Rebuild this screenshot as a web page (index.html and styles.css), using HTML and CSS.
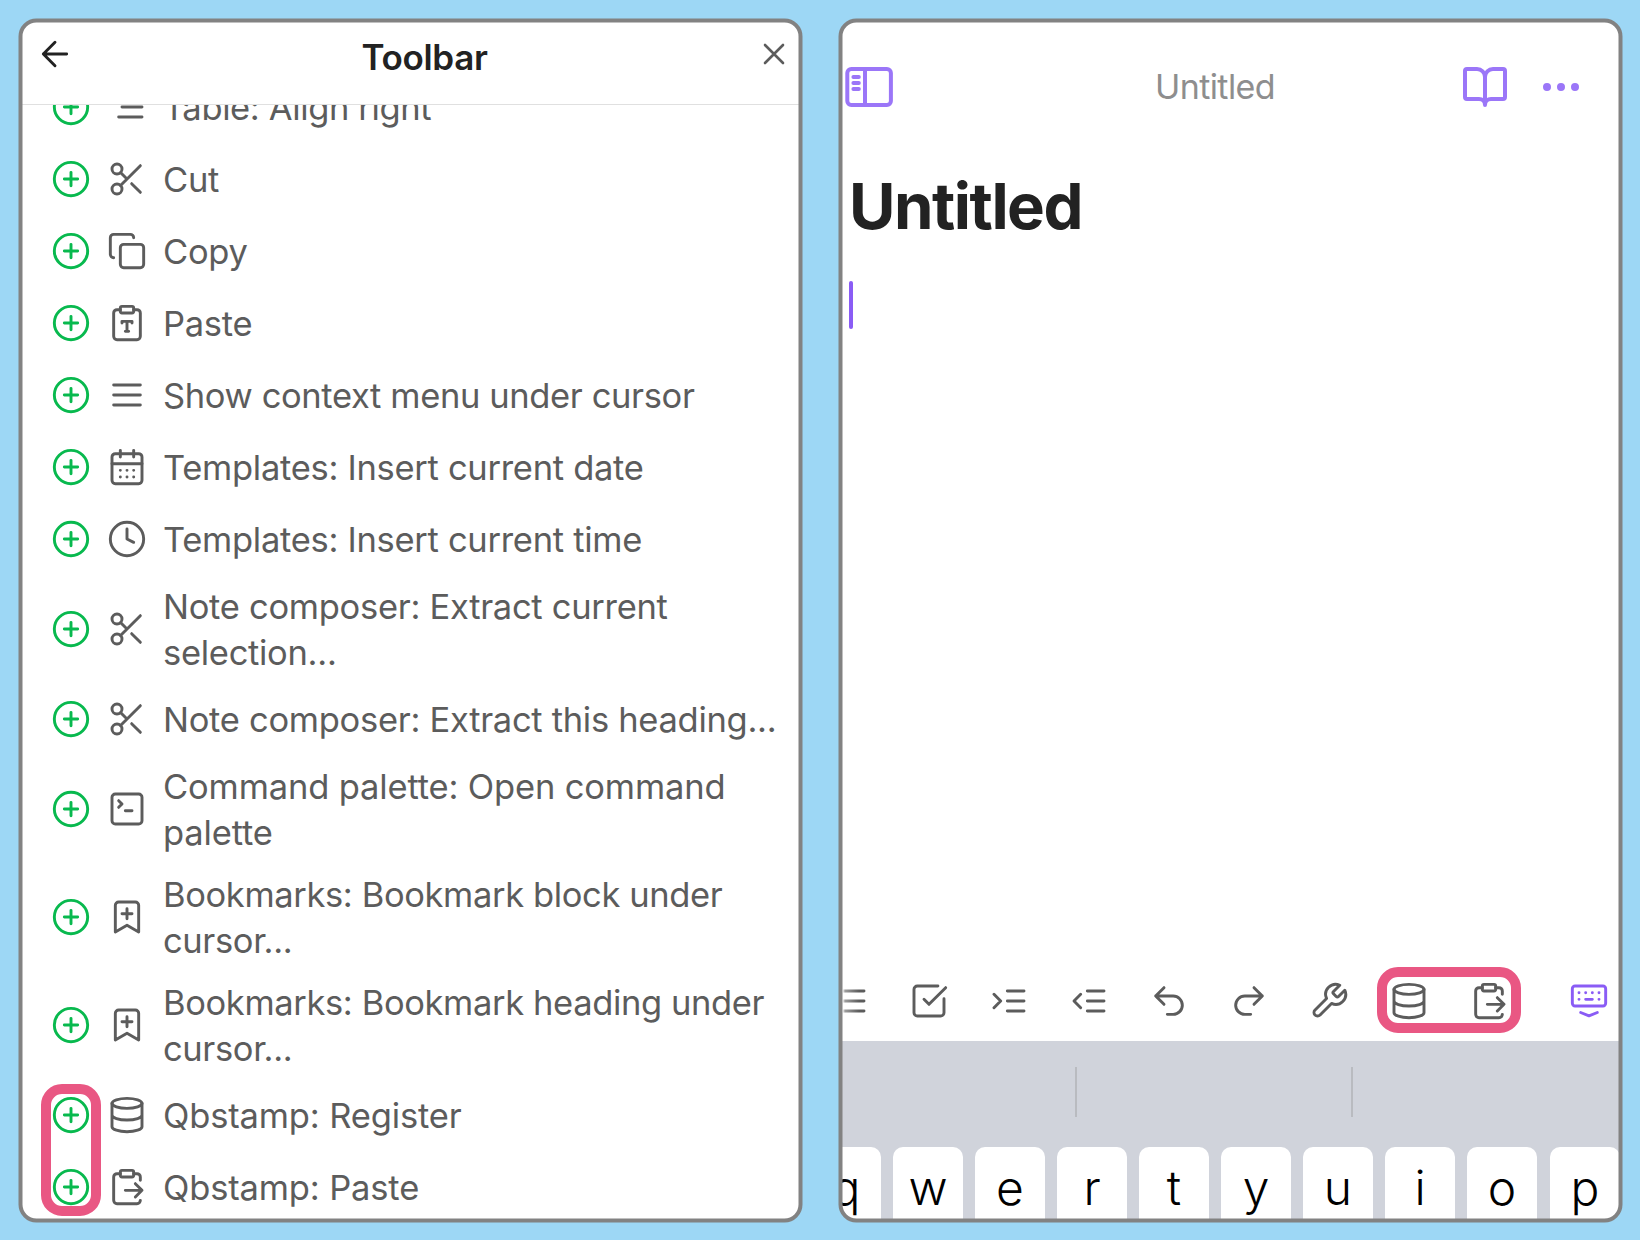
FILE: index.html
```html
<!DOCTYPE html>
<html lang="en">
<head>
<meta charset="utf-8">
<title>Toolbar settings</title>
<link rel="stylesheet" href="styles.css">
</head>
<body>
<svg class="sprite" aria-hidden="true">
  <symbol id="plus" viewBox="0 0 24 24"><circle cx="12" cy="12" r="10"/><path d="M8 12h8M12 8v8"/></symbol>
  <symbol id="align-right" viewBox="0 0 24 24"><path d="M21 6H3M21 12H9M21 18H7"/></symbol>
  <symbol id="cut" viewBox="0 0 24 24"><circle cx="6" cy="6" r="3"/><circle cx="6" cy="18" r="3"/><path d="M8.12 8.12 12 12M20 4 8.12 15.88M14.8 14.8 20 20"/></symbol>
  <symbol id="copy" viewBox="0 0 24 24"><rect x="8" y="8" width="14" height="14" rx="2"/><path d="M4 16c-1.1 0-2-.9-2-2V4c0-1.1.9-2 2-2h10c1.1 0 2 .9 2 2"/></symbol>
  <symbol id="paste" viewBox="0 0 24 24"><rect x="8" y="2" width="8" height="4" rx="1"/><path d="M16 4h2a2 2 0 0 1 2 2v14a2 2 0 0 1-2 2H6a2 2 0 0 1-2-2V6a2 2 0 0 1 2-2h2M9 12v-1h6v1M11 17h2M12 11v6"/></symbol>
  <symbol id="menu" viewBox="0 0 24 24"><path d="M4 6h16M4 12h16M4 18h16"/></symbol>
  <symbol id="calendar" viewBox="0 0 24 24"><rect x="3" y="4" width="18" height="18" rx="2"/><path d="M8 2v4M16 2v4M3 10h18M8 14h.01M12 14h.01M16 14h.01M8 18h.01M12 18h.01M16 18h.01"/></symbol>
  <symbol id="clock" viewBox="0 0 24 24"><circle cx="12" cy="12" r="10"/><path d="M12 6v6l4 2"/></symbol>
  <symbol id="terminal" viewBox="0 0 24 24"><rect x="3" y="3" width="18" height="18" rx="2"/><path d="m7 11 2-2-2-2M11 13h4"/></symbol>
  <symbol id="bookmark" viewBox="0 0 24 24"><path d="m19 21-7-4-7 4V5a2 2 0 0 1 2-2h10a2 2 0 0 1 2 2v16zM12 7v6M15 10H9"/></symbol>
  <symbol id="database" viewBox="0 0 24 24"><ellipse cx="12" cy="5" rx="9" ry="3"/><path d="M3 5v14c0 1.66 4.03 3 9 3s9-1.34 9-3V5M3 12c0 1.66 4.03 3 9 3s9-1.34 9-3"/></symbol>
  <symbol id="clip-arrow" viewBox="0 0 24 24"><rect x="8" y="2" width="8" height="4" rx="1"/><path d="M8 4H6a2 2 0 0 0-2 2v14a2 2 0 0 0 2 2h12a2 2 0 0 0 2-2M16 4h2a2 2 0 0 1 2 2v2M11 14h10M17 10l4 4-4 4"/></symbol>
  <symbol id="back" viewBox="0 0 24 24"><path d="M19 12H5M12 19l-7-7 7-7"/></symbol>
  <symbol id="close" viewBox="0 0 24 24"><path d="M18 6 6 18M6 6l12 12"/></symbol>
  <symbol id="list" viewBox="0 0 24 24"><path d="M8 6h13M8 12h13M8 18h13"/></symbol>
  <symbol id="check" viewBox="0 0 24 24"><path d="m9 11 3 3L22 4M21 10.66V19a2 2 0 0 1-2 2H5a2 2 0 0 1-2-2V5a2 2 0 0 1 2-2h12.34"/></symbol>
  <symbol id="indent" viewBox="0 0 24 24"><path d="m3 8 4 4-4 4M21 12H11M21 6H11M21 18H11"/></symbol>
  <symbol id="outdent" viewBox="0 0 24 24"><path d="m7 8-4 4 4 4M21 12H11M21 6H11M21 18H11"/></symbol>
  <symbol id="undo" viewBox="0 0 24 24"><path d="M9 14 4 9l5-5M4 9h10.5a5.5 5.5 0 0 1 0 11H11"/></symbol>
  <symbol id="redo" viewBox="0 0 24 24"><path d="m15 14 5-5-5-5M20 9H9.5a5.5 5.5 0 0 0 0 11H13"/></symbol>
  <symbol id="wrench" viewBox="0 0 24 24"><path d="M14.7 6.3a1 1 0 0 0 0 1.4l1.6 1.6a1 1 0 0 0 1.4 0l3.77-3.77a6 6 0 0 1-7.94 7.94l-6.91 6.91a2.12 2.12 0 0 1-3-3l6.91-6.91a6 6 0 0 1 7.94-7.94l-3.76 3.76z"/></symbol>
  <symbol id="keyboard" viewBox="0 0 24 24"><rect x="2" y="3" width="20" height="12" rx="1.6"/><path d="M6 7h.01M10 7h.01M14 7h.01M18 7h.01M6 11h.01M10 11h4M18 11h.01M7 18.9l5 2 5-2"/></symbol>
  <symbol id="book" viewBox="0 0 24 24"><path d="M12 7v14M3 18a1 1 0 0 1-1-1V4a1 1 0 0 1 1-1h5a4 4 0 0 1 4 4 4 4 0 0 1 4-4h5a1 1 0 0 1 1 1v13a1 1 0 0 1-1 1h-6a3 3 0 0 0-3 3 3 3 0 0 0-3-3z"/></symbol>
  <symbol id="more" viewBox="0 0 24 24"><circle cx="5" cy="12" r="1"/><circle cx="12" cy="12" r="1"/><circle cx="19" cy="12" r="1"/></symbol>
  <symbol id="sidebar" viewBox="0 0 48 40"><rect x="2.3" y="2" width="43.6" height="36" rx="4"/><path d="M20 2v36M8.4 10h5.4M8.4 16h5.4M8.4 22h5.4"/></symbol>
</svg>

<main class="panel">
  <div class="screen">
    <header class="modal-header">
      <svg class="icon back"><use href="#back"/></svg>
      <h1 class="modal-title">Toolbar</h1>
      <svg class="icon close"><use href="#close"/></svg>
    </header>
    <div class="scroll">
      <ul class="commands">
        <li><svg class="icon add"><use href="#plus"/></svg><svg class="icon"><use href="#align-right"/></svg><span class="tight">Table: Align right</span></li>
        <li><svg class="icon add"><use href="#plus"/></svg><svg class="icon"><use href="#cut"/></svg><span>Cut</span></li>
        <li><svg class="icon add"><use href="#plus"/></svg><svg class="icon"><use href="#copy"/></svg><span>Copy</span></li>
        <li><svg class="icon add"><use href="#plus"/></svg><svg class="icon"><use href="#paste"/></svg><span>Paste</span></li>
        <li><svg class="icon add"><use href="#plus"/></svg><svg class="icon"><use href="#menu"/></svg><span class="tight">Show context menu under cursor</span></li>
        <li><svg class="icon add"><use href="#plus"/></svg><svg class="icon"><use href="#calendar"/></svg><span>Templates: Insert current date</span></li>
        <li><svg class="icon add"><use href="#plus"/></svg><svg class="icon"><use href="#clock"/></svg><span>Templates: Insert current time</span></li>
        <li><svg class="icon add"><use href="#plus"/></svg><svg class="icon"><use href="#cut"/></svg><span>Note composer: Extract current<br>selection...</span></li>
        <li><svg class="icon add"><use href="#plus"/></svg><svg class="icon"><use href="#cut"/></svg><span>Note composer: Extract this heading...</span></li>
        <li><svg class="icon add"><use href="#plus"/></svg><svg class="icon"><use href="#terminal"/></svg><span class="loose">Command palette: Open command<br>palette</span></li>
        <li><svg class="icon add"><use href="#plus"/></svg><svg class="icon"><use href="#bookmark"/></svg><span class="tight">Bookmarks: Bookmark block under<br>cursor...</span></li>
        <li><svg class="icon add"><use href="#plus"/></svg><svg class="icon"><use href="#bookmark"/></svg><span class="tight">Bookmarks: Bookmark heading under<br>cursor...</span></li>
        <li><svg class="icon add"><use href="#plus"/></svg><svg class="icon"><use href="#database"/></svg><span class="loose">Qbstamp: Register</span></li>
        <li><svg class="icon add"><use href="#plus"/></svg><svg class="icon"><use href="#clip-arrow"/></svg><span class="loose">Qbstamp: Paste</span></li>
      </ul>
    </div>
  </div>
  <div class="marker marker-list"></div>
</main>

<section class="panel">
  <div class="screen">
    <nav class="note-nav">
      <svg class="nav-icon sidebar"><use href="#sidebar"/></svg>
      <span class="nav-title">Untitled</span>
      <svg class="nav-icon"><use href="#book"/></svg>
      <svg class="nav-icon"><use href="#more"/></svg>
    </nav>
    <article class="note">
      <h2 class="note-title">Untitled</h2>
      <div class="caret"></div>
    </article>
    <div class="toolbar">
      <svg class="icon faded"><use href="#list"/></svg>
      <svg class="icon"><use href="#check"/></svg>
      <svg class="icon"><use href="#indent"/></svg>
      <svg class="icon"><use href="#outdent"/></svg>
      <svg class="icon"><use href="#undo"/></svg>
      <svg class="icon"><use href="#redo"/></svg>
      <svg class="icon"><use href="#wrench"/></svg>
      <svg class="icon"><use href="#database"/></svg>
      <svg class="icon"><use href="#clip-arrow"/></svg>
      <svg class="icon accent"><use href="#keyboard"/></svg>
    </div>
    <div class="keyboard">
      <div class="suggestions"><i></i><i></i></div>
      <div class="keys">
        <kbd>q</kbd><kbd>w</kbd><kbd>e</kbd><kbd>r</kbd><kbd>t</kbd><kbd>y</kbd><kbd>u</kbd><kbd>i</kbd><kbd>o</kbd><kbd class="last">p</kbd>
      </div>
    </div>
  </div>
  <div class="marker marker-toolbar"></div>
</section>
</body>
</html>
```

FILE: styles.css
```css
*, *::after { box-sizing: border-box; }

body {
  margin: 0;
  width: 1640px;
  height: 1240px;
  padding: 18px;
  display: flex;
  gap: 35px;
  overflow: hidden;
  background: #9dd7f5;
  font-family: Inter, "Liberation Sans", sans-serif;
  color: #5c5c5c;
}

.sprite { position: absolute; width: 0; height: 0; }

.panel {
  position: relative;
  flex: none;
  width: 785px;
  height: 1205px;
  padding: 2px;
}

.panel::after {
  content: "";
  position: absolute;
  left: 0;
  top: 0;
  width: 784px;
  height: 1204px;
  border: 4px solid #828282;
  border-radius: 18px;
  transform: translate(.5px, .5px);
}

.screen {
  width: 781px;
  height: 1201px;
  display: flex;
  flex-direction: column;
  overflow: hidden;
  border-radius: 16px;
  background: #fff;
}

.icon {
  flex: none;
  width: 40px;
  height: 40px;
  fill: none;
  stroke: #5c5c5c;
  stroke-width: 1.75;
  stroke-linecap: round;
  stroke-linejoin: round;
}

.icon.add { stroke: #08b94e; }
.icon.accent { stroke: #8a5cf5; }

/* Toolbar settings */
.modal-header {
  flex: none;
  height: 85px;
  padding: 14px 9px 0 15px;
  display: flex;
  align-items: flex-start;
  border-bottom: 1px solid #e0e0e0;
}

.icon.back { stroke: #222; }
.icon.close { width: 36px; height: 36px; margin-top: 2px; }

.modal-title {
  flex: 1;
  margin: 0;
  padding-left: 18px;
  text-align: center;
  font-size: 35px;
  line-height: 46px;
  font-weight: 600;
  letter-spacing: -.35px;
  color: #222;
}

.scroll { flex: 1; min-height: 0; overflow: hidden; }

.commands { list-style: none; margin: -34px 0 0; padding: 0 0 0 31px; }

.commands li {
  display: flex;
  align-items: center;
  min-height: 72px;
  padding: 8px 0;
}

.commands .icon + .icon { margin: 0 16px; }

.commands span {
  margin: 1px 0 -1px;
  font-size: 34.5px;
  line-height: 46px;
  letter-spacing: -.29px;
  white-space: nowrap;
}

.commands .tight { letter-spacing: -.37px; }
.commands .loose { letter-spacing: -.15px; }

/* Note editor */
.note-nav {
  flex: none;
  display: grid;
  grid-template-columns: 48px 1fr 48px 76px;
  align-items: center;
  height: 134px;
  padding: 0 36px 0 5px;
}

.nav-icon {
  width: 48px;
  height: 48px;
  fill: none;
  stroke: #9b76f8;
  stroke-width: 2;
  stroke-linecap: round;
  stroke-linejoin: round;
}

.nav-icon + .nav-icon { justify-self: end; }
.nav-icon.sidebar { height: 40px; stroke-width: 4; }

.nav-title {
  padding-left: 76px;
  text-align: center;
  font-size: 34px;
  line-height: 46px;
  letter-spacing: -.6px;
  color: #8e8e8e;
}

.note { flex: 1; padding: 12px 9px 0; }

.note-title {
  margin: 0;
  font-size: 63.5px;
  line-height: 80px;
  font-weight: 700;
  letter-spacing: -1.5px;
  color: #222;
}

.caret {
  width: 4px;
  height: 48px;
  margin-top: 35px;
  border-radius: 2px;
  background: #8a5cf5;
}

.toolbar {
  flex: none;
  display: flex;
  align-items: center;
  gap: 40px;
  height: 80px;
  margin-left: -11px;
}

.toolbar .accent { margin-left: 20px; }
.toolbar .faded {
  -webkit-mask-image: linear-gradient(90deg, transparent 34%, rgba(0,0,0,.6) 40%, #000 75%);
  mask-image: linear-gradient(90deg, transparent 34%, rgba(0,0,0,.6) 40%, #000 75%);
}

.keyboard { flex: none; height: 180px; overflow: hidden; background: #d0d3db; }

.suggestions { display: flex; height: 76px; padding-top: 26px; }
.suggestions i { flex: none; width: 276px; border-right: 2px solid #b9bbc0; }
.suggestions i:first-child { width: 237px; }

.keys { display: flex; gap: 12px; margin: 30px 0 0 -29px; }

.keys kbd {
  flex: none;
  width: 70px;
  height: 90px;
  border-radius: 10px;
  background: #fff;
  color: #000;
  text-align: center;
  font-family: inherit;
  font-size: 48px;
  font-weight: 340;
  line-height: 82px;
}

.keys .last { margin-left: 1px; }

/* Rounded callouts around the newly added commands */
.marker {
  position: absolute;
  border: 10px solid #e95783;
  border-radius: 21px;
}

.marker-list { left: 23px; top: 1066px; width: 60px; height: 132px; }
.marker-toolbar { left: 539px; top: 949px; width: 144px; height: 66px; }
```
